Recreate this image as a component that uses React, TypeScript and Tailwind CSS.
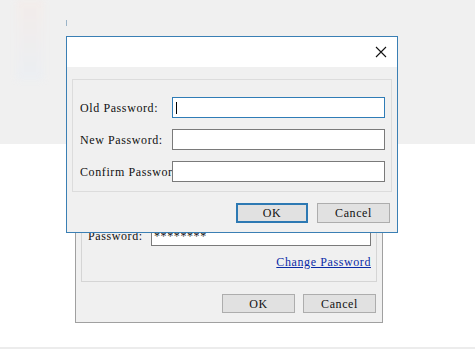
import React from 'react';

const font = "font-['Liberation_Serif','DejaVu_Serif',serif] text-[12px] tracking-[0.6px] text-[#111]";

const Button = ({ label, primary, className = '' }: { label: string; primary?: boolean; className?: string }) => (
  <div
    className={`flex items-center justify-center bg-[#e1e1e1] ${
      primary ? 'border-2 border-[#2d79b3]' : 'border border-[#adadad]'
    } ${className}`}
  >
    {label}
  </div>
);

const Field = ({ focused, children }: { focused?: boolean; children?: React.ReactNode }) => (
  <div
    className={`h-[21px] w-[213px] bg-white border flex items-center pl-[3px] ${
      focused ? 'border-[#2f7cb6]' : 'border-[#7a7a7a]'
    }`}
  >
    {children}
  </div>
);

const Row = ({ label, focused }: { label: string; focused?: boolean }) => (
  <div className="flex items-center h-[21px]">
    <div className="w-[92px] overflow-hidden whitespace-nowrap">{label}</div>
    <Field focused={focused}>{focused && <div className="w-px h-[12px] bg-black" />}</Field>
  </div>
);

export default function App() {
  return (
    <div className={`relative w-[475px] h-[357px] overflow-hidden bg-white flex flex-col ${font}`}>
      <div className="h-[144px] bg-[#f0f0f0]" />
      <div className="flex-1" />
      <div className="h-[2px] bg-[#ececec] mb-[8px]" />

      {/* faint blur at left */}
      <div className="absolute left-[16px] top-0 w-[28px] h-[80px] bg-gradient-to-b from-[#f5ebe7] to-[#e9eef4] opacity-60 blur-[3px]" />
      <div className="absolute left-[66px] top-[20px] w-px h-[6px] bg-[#9bb4c8]" />

      {/* back dialog */}
      <div className="absolute left-[75px] top-[150px] w-[308px] h-[173px] border border-[#a0a0a0] bg-[#f0f0f0] flex flex-col px-[5px]">
        <div className="flex-1 border border-[#d5d5d5] flex flex-col justify-end pl-[6px] pr-[5px] pb-[13px]">
          <div className="flex items-center h-[20px]">
            <div className="w-[63px] whitespace-nowrap">Password:</div>
            <div className="flex-1 h-[20px] bg-white border border-[#7a7a7a] flex items-center pl-[2px] leading-none">
              ********
            </div>
          </div>
          <div className="mt-[10px] h-[12px] leading-[12px] text-right text-[#0a2aa6] underline">Change Password</div>
        </div>
        <div className="mt-[12px] mb-[9px] h-[19px] flex justify-end gap-[8px] pr-[1px]">
          <Button label="OK" className="w-[73px]" />
          <Button label="Cancel" className="w-[73px]" />
        </div>
      </div>

      {/* front dialog */}
      <div className="absolute left-[66px] top-[36px] w-[332px] h-[197px] border border-[#3a7fb4] bg-[#f0f0f0] flex flex-col">
        <div className="h-[30px] bg-white flex items-center justify-end pr-[10px]">
          <svg width="12" height="12" viewBox="0 0 12 12">
            <path d="M1 1 L11 11 M11 1 L1 11" stroke="#111" strokeWidth="1.1" fill="none" />
          </svg>
        </div>
        <div className="mx-[5px] mt-[12px] h-[113px] border border-[#dcdcdc] pl-[7px] pt-[17px] flex flex-col gap-[11px]">
          <Row label="Old Password:" focused />
          <Row label="New Password:" />
          <Row label="Confirm Password:" />
        </div>
        <div className="mt-[11px] h-[20px] flex justify-end gap-[9px] pr-[7px]">
          <Button label="OK" primary className="w-[72px]" />
          <Button label="Cancel" className="w-[73px]" />
        </div>
      </div>
    </div>
  );
}
